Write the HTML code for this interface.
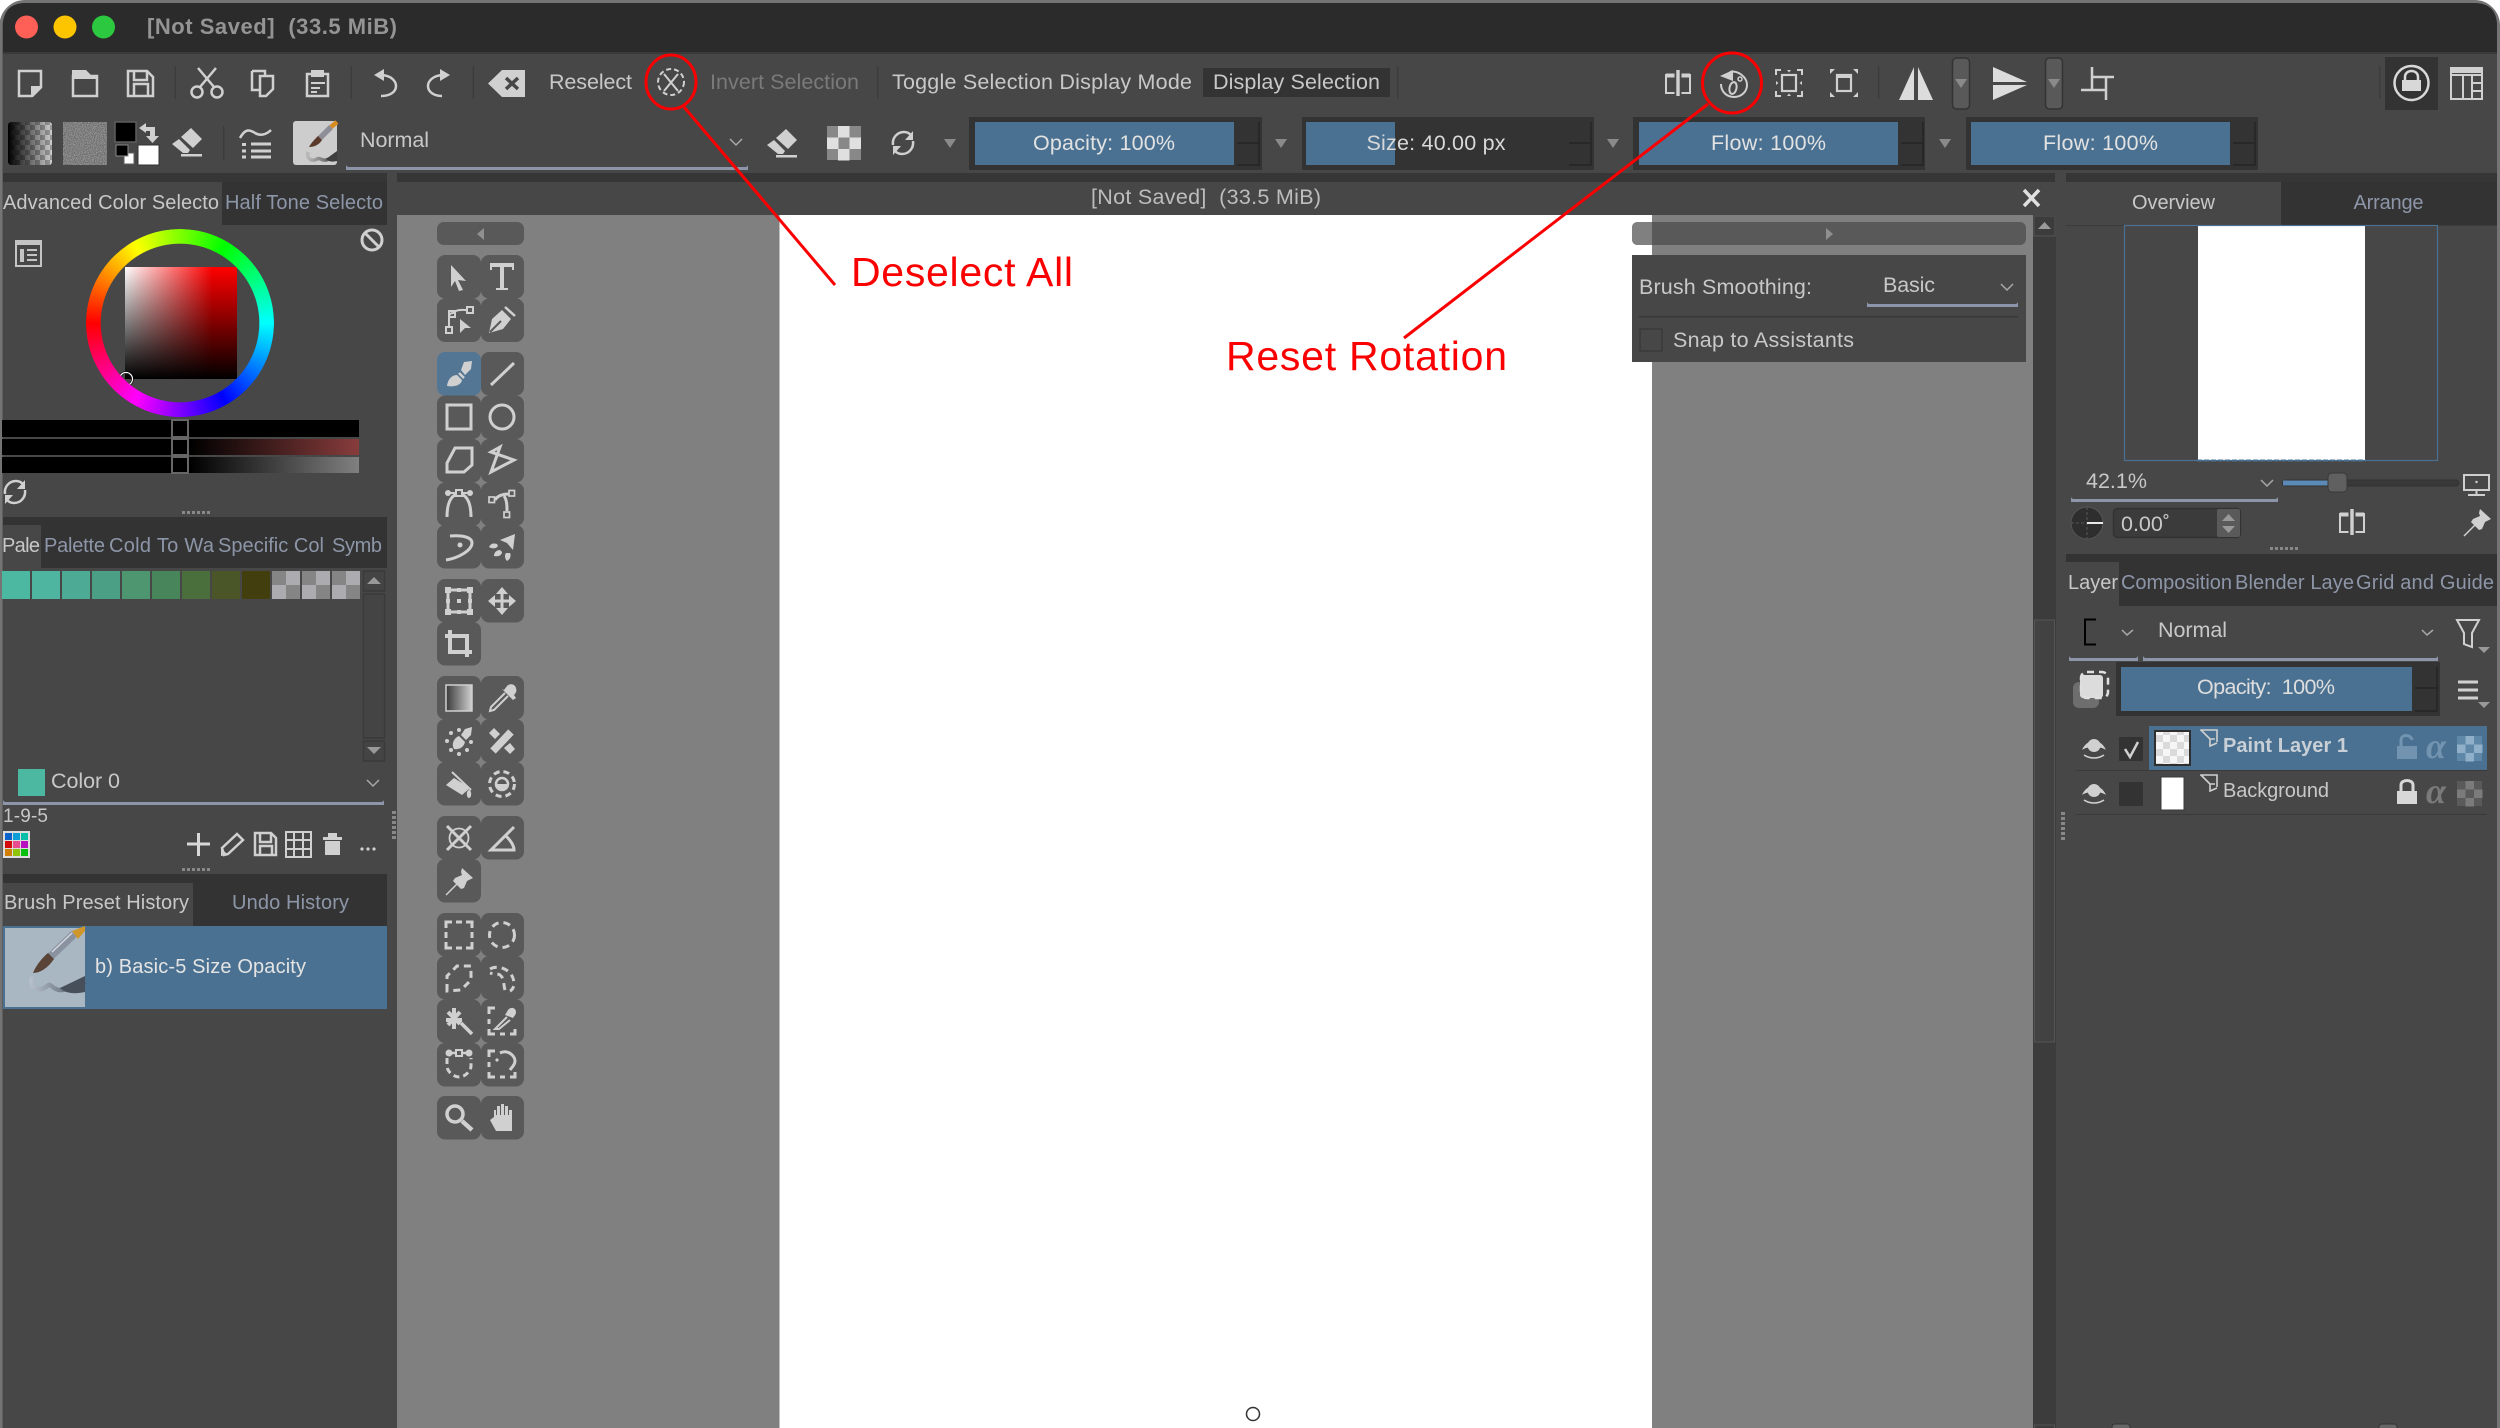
<!DOCTYPE html>
<html><head><meta charset="utf-8"><title>Krita</title>
<style>
html,body{margin:0;padding:0;background:#fff;width:2500px;height:1428px;overflow:hidden}
svg{position:absolute;left:0;top:0;display:block}
text{font-family:"Liberation Sans",sans-serif;font-size:21.5px;fill:#c8c8c8;white-space:pre}
.tab{font-size:20px}
.in{fill:#8d96a8}
.s{fill:none;stroke:#d0d0d0;stroke-width:2.5}
.f{fill:#d0d0d0;stroke:none}
.d{fill:none;stroke:#d0d0d0;stroke-width:3;stroke-dasharray:5 4}
.sep{fill:#3c3c3c}
.ul{fill:#8c95aa}
.chev{fill:none;stroke:#a8a8a8;stroke-width:1.5}
.cell{fill:#595959}
.red{fill:#fa0000;font-size:41px}
#wheel{position:absolute;left:86px;top:229px;width:188px;height:188px;border-radius:50%;
background:conic-gradient(from 270deg,#f00,#ff0,#0f0,#0ff,#00f,#f0f,#f00);
-webkit-mask:radial-gradient(circle,transparent 79px,#000 79.6px);mask:radial-gradient(circle,transparent 79px,#000 79.6px)}
</style></head><body>
<svg width="2500" height="1428" viewBox="0 0 2500 1428" xmlns="http://www.w3.org/2000/svg">
<defs>
<pattern id="ck8" width="10" height="10" patternUnits="userSpaceOnUse"><rect width="10" height="10" fill="#9a9a9a"/><rect width="5" height="5" fill="#cfcfcf"/><rect x="5" y="5" width="5" height="5" fill="#cfcfcf"/></pattern>
<pattern id="ck9" width="14" height="14" patternUnits="userSpaceOnUse"><rect width="14" height="14" fill="#dadada"/><rect width="7" height="7" fill="#f6f6f6"/><rect x="7" y="7" width="7" height="7" fill="#f6f6f6"/></pattern>
<filter id="nz" x="0" y="0" width="1" height="1" color-interpolation-filters="sRGB"><feTurbulence type="fractalNoise" baseFrequency="1.1" numOctaves="2" seed="3"/><feColorMatrix values=".5 0 0 0 .25  .5 0 0 0 .25  .5 0 0 0 .25  0 0 0 0 1"/></filter>
<linearGradient id="gk"><stop offset="0" stop-color="#000"/><stop offset="1" stop-color="#000" stop-opacity="0"/></linearGradient>
<linearGradient id="wr"><stop offset="0" stop-color="#fff"/><stop offset=".78" stop-color="#f00"/><stop offset="1" stop-color="#f00"/></linearGradient>
<linearGradient id="vk" x2="0" y2="1"><stop offset="0" stop-color="#000" stop-opacity="0"/><stop offset="1" stop-color="#000"/></linearGradient>
<linearGradient id="g2"><stop offset="0" stop-color="#000"/><stop offset="1" stop-color="#883c3c"/></linearGradient>
<linearGradient id="g3"><stop offset="0" stop-color="#000"/><stop offset="1" stop-color="#808080"/></linearGradient>
<linearGradient id="gt"><stop offset="0" stop-color="#3a3a3a"/><stop offset="1" stop-color="#d0d0d0"/></linearGradient>
<linearGradient id="st"><stop offset="0" stop-color="#b4bec8"/><stop offset=".5" stop-color="#7d8892"/><stop offset="1" stop-color="#3f4750"/></linearGradient>
<linearGradient id="st0"><stop offset="0" stop-color="#b8b8b8"/><stop offset=".5" stop-color="#808080"/><stop offset="1" stop-color="#333"/></linearGradient>
<g id="eye"><path class="f" d="M-12 2C-7-10 7-10 12 2C7-2-7-2-12 2Z"/><circle class="f" cy="-2.500" r="6.500"/><path class="s" style="stroke-width:1.600" d="M-10 7C-4 11 4 11 10 7"/></g>
<g id="drop"><path class="f" d="M2-8L5-12C8-15 13-14 14-10C15-7 14-5 12-3L14 0L11 2L0-9L2-8Z"/><path class="s" style="stroke-width:2" d="M3-5L-11 9L-12 13L-8 12L6-2"/></g>
<g id="mir"><rect class="f" x="-1.700" y="-13" width="3.400" height="26"/><path class="s" style="stroke-width:2" d="M-3.500-8H-12V10H-3.500M3.500-8H12V10H3.500"/><path class="f" d="M-12-9.500H-3.500V-5.500H-12ZM3.500-9.500H12V-5.500H3.500Z"/></g>
<g id="pin"><path class="f" d="M3-13L14-3L10-1L8 0L5 7L2 8L-6 0L-4-3L3-6L2-9Z"/><path class="s" style="stroke-width:1.500" d="M-2 3L-13 14"/></g>
<g id="lay"><path class="s" style="stroke-width:1.600" d="M-8-8V-9H8V3"/><path class="s" style="stroke-width:1.600" d="M-8-9L1 0V7L8 4M1 0H6"/></g>
<g id="refr"><path class="s" d="M-10 2C-11-5-6-11 1-11C4-11 6-10 8-8M10-2C11 5 6 11-1 11C-4 11-6 10-8 8"/><path class="f" d="M10-12V-3H2ZM-10 12V3H-2Z"/></g>
<g id="erase"><path class="f" d="M4-14L15-3L6 6L-6-5Z"/><path class="f" d="M-8-3L3 8L1 11H-4L-15 2Z"/><rect class="f" x="-6" y="12" width="21" height="2.500"/></g>
</defs>

<!-- window -->
<rect x="1" y="1.500" width="2497.500" height="1480" rx="24" fill="#474747" stroke="#747474" stroke-width="3"/>
<path d="M3 26Q3 3 26 3H2474Q2497 3 2497 26V53H3Z" fill="#2b2b2b"/>
<rect x="3" y="52" width="2494" height="2" fill="#3a3a3a"/>
<circle cx="26.500" cy="27" r="11.500" fill="#fe5f57"/><circle cx="65" cy="27" r="11.500" fill="#fdc400"/><circle cx="103.500" cy="27" r="11.500" fill="#2bc840"/>
<text x="147" y="34" textLength="250" style="font-size:22px;fill:#949494;font-weight:bold">[Not Saved]  (33.5 MiB)</text>

<!-- strip -->
<rect x="3" y="173" width="384" height="9" fill="#363636"/><rect x="397" y="173" width="1658" height="9" fill="#363636"/><rect x="2066" y="173" width="431" height="9" fill="#363636"/>

<!-- toolbar 1 -->
<path class="s" d="M19 71H41V87L32 96H19Z"/><path class="f" d="M42 86V88L33 97H31V86Z"/>
<path class="s" d="M73 76H97V96H73Z"/><path class="f" d="M72 70H86L92 76H97V79H72Z"/>
<path class="s" d="M128 71H147L153 77V96H128Z"/><path class="s" d="M134 71V80H147V71M134 96V84H148V96"/>
<circle class="s" cx="197" cy="92" r="5.500"/><circle class="s" cx="217" cy="92" r="5.500"/><path class="s" d="M200 87L216 68M214 87L198 68"/>
<path class="s" d="M252 71H265V76M252 71V90H260"/><path class="s" d="M260 76H273V89L266 96H260Z"/>
<path class="s" d="M307 74H328V96H307Z"/><rect class="f" x="311" y="70" width="13" height="7"/><path class="s" style="stroke-width:2" d="M311 83H325M311 88H320M311 92H317"/>
<path class="f" d="M384 69V81L374 75Z"/><path class="s" d="M380 75C392 75 396 82 396 86C396 92 390 96 381 96"/>
<path class="f" d="M440 69V81L450 75Z"/><path class="s" d="M444 75C432 75 428 82 428 86C428 92 434 96 442 96"/>
<rect class="sep" x="174.500" y="66" width="1.500" height="33"/><rect class="sep" x="350.500" y="66" width="1.500" height="33"/><rect class="sep" x="472.500" y="66" width="1.500" height="33"/>
<path class="f" d="M488 83.500L502 70H525V97H502Z"/><path d="M506 78L518 89M518 78L506 89" stroke="#474747" stroke-width="3.500" fill="none"/>
<text x="549" y="89" textLength="83">Reselect</text>
<circle class="d" cx="671" cy="82" r="13" style="stroke-width:2;stroke-dasharray:5 3"/><path class="s" style="stroke-width:2" d="M664 74L678 91M678 74L664 91"/>
<text x="710" y="89" textLength="149" style="fill:#7a7a7a">Invert Selection</text>
<rect class="sep" x="877" y="66" width="1.500" height="33"/>
<text x="892" y="89" textLength="300">Toggle Selection Display Mode</text>
<rect x="1203" y="68" width="187" height="29" fill="#333"/>
<text x="1213" y="89" textLength="167">Display Selection</text>
<rect class="sep" x="1397" y="66" width="1.500" height="33"/>

<use href="#mir" x="1678" y="83"/>
<g transform="translate(1734,84)"><path class="s" style="stroke-width:2" d="M-4-12C4-14 13-7 13 1C13 8 7 13 0 13C-7 13-13 8-13 0"/><path class="f" d="M-1-14V-3L-14-8Z"/><ellipse class="s" style="stroke-width:2" cx="-1" cy="4" rx="3.500" ry="6" transform="rotate(12 -1 4)"/><circle class="s" style="stroke-width:1.500" cx="6" cy="-5" r="2"/></g>
<g transform="translate(1789,83)"><path class="s" style="stroke-width:2" d="M-13-8V-13H-8M8-13H13V-8M13 8V13H8M-8 13H-13V8"/><rect class="s" style="stroke-width:2.200" x="-7" y="-8" width="14" height="16"/><path class="f" d="M-2-13H2L0-10.500ZM-2 13H2L0 10.500ZM-13-2V2L-10.500 0ZM13-2V2L10.500 0Z"/></g>
<g transform="translate(1844,83)"><rect class="s" style="stroke-width:2.200" x="-7" y="-8" width="14" height="16"/><rect class="f" x="-7" y="-9" width="14" height="4"/><path class="f" d="M-14-14H-9L-14-9ZM14-14H9L14-9ZM-14 14H-9L-14 9ZM14 14H9L14 9Z"/></g>
<rect class="sep" x="1878" y="66" width="1.500" height="33"/>
<path d="M1899 100L1914 67V100ZM1918 67L1933 100H1918Z" fill="#dcdcdc"/>
<rect x="1952.500" y="58" width="17" height="51" rx="4" fill="#595959" stroke="#333" stroke-width="1.500"/><path d="M1955 79H1967L1961 88Z" fill="#8a8a8a"/>
<path d="M1993 67L2027 82H1993ZM1993 85H2027L1993 100Z" fill="#dcdcdc"/>
<rect x="2045.500" y="58" width="17" height="51" rx="4" fill="#595959" stroke="#333" stroke-width="1.500"/><path d="M2048 79H2060L2054 88Z" fill="#8a8a8a"/>
<path class="s" d="M2092 67V91M2081 90H2106M2092 77H2114M2106 77V100"/>
<rect class="sep" x="2379" y="66" width="1.500" height="33"/>
<rect x="2385" y="57" width="53" height="53" fill="#333"/>
<circle cx="2411.500" cy="83" r="17" fill="none" stroke="#d8d8d8" stroke-width="2.500"/><rect x="2402" y="80" width="19" height="11" fill="#d8d8d8"/><path d="M2405 81V77C2405 69 2418 69 2418 77V81" fill="none" stroke="#d8d8d8" stroke-width="2.500"/>
<g fill="none" stroke="#d0d0d0" stroke-width="2"><rect x="2451" y="68" width="31" height="31"/><path d="M2451 75H2482M2463 75V99M2472 75V99M2472 83H2482M2472 91H2482"/></g><rect class="f" x="2451" y="68" width="31" height="5"/>

<!-- toolbar 2 -->
<rect x="8" y="122" width="44" height="43" rx="3" fill="url(#ck8)"/><rect x="8" y="122" width="44" height="43" rx="3" fill="url(#gk)"/>
<rect x="63" y="122" width="44" height="43" rx="3" fill="#7e7e7e" filter="url(#nz)"/>
<rect x="115" y="122" width="21" height="20" fill="#000" stroke="#5e5e5e" stroke-width="1.500"/>
<rect x="124" y="153" width="10" height="11" fill="#fff" stroke="#5e5e5e"/><rect x="116" y="145" width="12" height="11" fill="#000" stroke="#888"/>
<rect x="138" y="145" width="21" height="20" fill="#fff" stroke="#333"/>
<path class="f" d="M146 123V133L139 128ZM146 127H155V136H159L152.500 143L146 136H150V131H146Z"/>
<use href="#erase" x="187" y="142"/>
<rect class="sep" x="223" y="126" width="1.500" height="34"/>
<g transform="translate(255,143)"><path class="s" d="M-15-5C-10-14-6-14 0-10C5-7 11-8 16-13"/><path class="s" style="stroke-width:3" d="M-4 1H16M-4 8H16M-4 14H16"/><rect class="f" x="-13" y="0" width="4" height="3"/><rect class="f" x="-13" y="6.500" width="4" height="3"/><rect class="f" x="-13" y="12.500" width="4" height="3"/></g>
<rect x="293" y="121" width="44" height="44" rx="3" fill="#cdcdcd"/>
<path d="M319 139L331 127" stroke="#8e8e98" stroke-width="5.500"/><path d="M331 127L337 122" stroke="#d88b1f" stroke-width="4.500" fill="none"/>
<path d="M309 147C311 143 316 138 318 136L322 140C319 145 314 147 309 147Z" fill="#5b3a2c"/>
<path d="M308 152C306 159 312 162 317 159C320 157 321 161 326 160C330 159 334 157 337 156" fill="none" stroke="url(#st0)" stroke-width="3.500"/><path d="M326 159L337 151V161C333 162 329 162 326 159Z" fill="#3e3e3e"/>
<text x="360" y="147" textLength="69">Normal</text>
<path class="chev" d="M730 139L736 145L742 139"/>
<path class="ul" d="M346 165C347 167 348 167 350 167H744C746 167 747 167 748 165V170H346Z"/>
<use href="#erase" x="782" y="143"/>
<g><rect x="827" y="126" width="34" height="34" fill="#888"/><rect x="838" y="126" width="11.500" height="11.500" fill="#e0e0e0"/><rect x="827" y="137.500" width="11.500" height="11.500" fill="#e0e0e0"/><rect x="849.500" y="137.500" width="11.500" height="11.500" fill="#e0e0e0"/><rect x="838" y="149" width="11.500" height="11.500" fill="#e0e0e0"/></g>
<use href="#refr" x="903" y="143"/>
<path d="M944 139H956L950 148Z" fill="#8a8a8a"/><path d="M1275 139H1287L1281 148Z" fill="#8a8a8a"/><path d="M1607 139H1619L1613 148Z" fill="#8a8a8a"/><path d="M1939 139H1951L1945 148Z" fill="#8a8a8a"/>

<!-- sliders -->
<g fill="#333"><rect x="969" y="117" width="293" height="53"/><rect x="1302" y="117" width="292" height="53"/><rect x="1633" y="117" width="292" height="53"/><rect x="1966" y="117" width="292" height="53"/></g>
<g fill="#4a7191"><rect x="975" y="122" width="259" height="43"/><rect x="1306" y="122" width="89" height="43"/><rect x="1639" y="122" width="259" height="43"/><rect x="1971" y="122" width="259" height="43"/></g>
<g fill="none" stroke="#252525" stroke-width="1.500"><path d="M1237 143H1259V165H1237M1259 122V143"/><path d="M1569 143H1591V165H1569M1591 122V143"/><path d="M1901 143H1923V165H1901M1923 122V143"/><path d="M2233 143H2255V165H2233M2255 122V143"/></g>
<text x="1033" y="150" textLength="142" style="fill:#e2e2e2">Opacity: 100%</text>
<text x="1366.500" y="150" textLength="139" style="fill:#d8d8d8">Size: 40.00 px</text>
<text x="1711" y="150" textLength="115" style="fill:#e2e2e2">Flow: 100%</text>
<text x="2043" y="150" textLength="115" style="fill:#e2e2e2">Flow: 100%</text>

<!-- left dock -->
<rect x="3" y="182" width="384" height="43" fill="#333"/><rect x="3" y="182" width="219" height="43" fill="#474747"/>
<text class="tab" x="3" y="209" textLength="216">Advanced Color Selecto</text>
<text class="tab in" x="225" y="209" textLength="158">Half Tone Selecto</text>
<g fill="none" stroke="#c4c4c4" stroke-width="2"><rect x="16" y="241" width="25" height="25"/></g><rect x="16" y="241" width="25" height="4" fill="#c4c4c4"/><rect x="20" y="249" width="4" height="13" fill="#c4c4c4"/><path d="M27 250H37M27 255H37M27 260H37" stroke="#c4c4c4" stroke-width="2"/>
<circle cx="372" cy="240" r="10" fill="none" stroke="#d0d0d0" stroke-width="3"/><path d="M365 233L379 247" stroke="#d0d0d0" stroke-width="3"/>
<rect x="125" y="267" width="112" height="112" fill="url(#wr)"/><rect x="125" y="267" width="112" height="112" fill="url(#vk)"/>
<circle cx="126" cy="379" r="6.500" fill="none" stroke="#000" stroke-width="2.500"/><circle cx="126" cy="379" r="6.500" fill="none" stroke="#fff" stroke-width="1.200"/>
<rect x="2" y="420" width="357" height="17" fill="#000"/>
<rect x="2" y="439" width="357" height="16" fill="#000"/><rect x="190" y="439" width="169" height="16" fill="url(#g2)"/>
<rect x="2" y="457" width="357" height="16" fill="#000"/><rect x="190" y="457" width="169" height="16" fill="url(#g3)"/>
<g fill="none" stroke="#666" stroke-width="2"><rect x="172" y="420" width="16" height="17"/><rect x="172" y="439" width="16" height="16"/><rect x="172" y="457" width="16" height="16"/></g>
<use href="#refr" x="15" y="492"/>
<g fill="#888"><rect x="182" y="511" width="3" height="3"/><rect x="187" y="511" width="3" height="3"/><rect x="192" y="511" width="3" height="3"/><rect x="197" y="511" width="3" height="3"/><rect x="202" y="511" width="3" height="3"/><rect x="207" y="511" width="3" height="3"/>
<rect x="182" y="868" width="3" height="3"/><rect x="187" y="868" width="3" height="3"/><rect x="192" y="868" width="3" height="3"/><rect x="197" y="868" width="3" height="3"/><rect x="202" y="868" width="3" height="3"/><rect x="207" y="868" width="3" height="3"/>
<rect x="2270" y="547" width="3" height="3"/><rect x="2275" y="547" width="3" height="3"/><rect x="2280" y="547" width="3" height="3"/><rect x="2285" y="547" width="3" height="3"/><rect x="2290" y="547" width="3" height="3"/><rect x="2295" y="547" width="3" height="3"/>
<rect x="392" y="811" width="4" height="3"/><rect x="392" y="816" width="4" height="3"/><rect x="392" y="821" width="4" height="3"/><rect x="392" y="826" width="4" height="3"/><rect x="392" y="831" width="4" height="3"/><rect x="392" y="836" width="4" height="3"/>
<rect x="2061" y="812" width="4" height="3"/><rect x="2061" y="817" width="4" height="3"/><rect x="2061" y="822" width="4" height="3"/><rect x="2061" y="827" width="4" height="3"/><rect x="2061" y="832" width="4" height="3"/><rect x="2061" y="837" width="4" height="3"/></g>
<rect x="3" y="517" width="384" height="51" fill="#333"/><rect x="3" y="525" width="38" height="43" fill="#474747"/>
<text class="tab" x="2" y="552" textLength="38">Pale</text>
<text class="tab in" x="44" y="552" textLength="61">Palette</text>
<text class="tab in" x="109" y="552" textLength="105">Cold To Wa</text>
<text class="tab in" x="218" y="552" textLength="106">Specific Col</text>
<text class="tab in" x="332" y="552" textLength="50">Symb</text>
<g><rect x="2" y="571" width="28" height="28" fill="#4db8a2"/><rect x="32" y="571" width="28" height="28" fill="#4db5a0"/><rect x="62" y="571" width="28" height="28" fill="#4dab95"/><rect x="92" y="571" width="28" height="28" fill="#4a9f85"/><rect x="122" y="571" width="28" height="28" fill="#4d9670"/><rect x="152" y="571" width="28" height="28" fill="#48855a"/><rect x="182" y="571" width="28" height="28" fill="#4a6e3c"/><rect x="212" y="571" width="28" height="28" fill="#4a5528"/><rect x="242" y="571" width="28" height="28" fill="#423e0e"/></g>
<g fill="#858585"><rect x="272" y="571" width="28" height="28"/><rect x="302" y="571" width="28" height="28"/><rect x="332" y="571" width="28" height="28"/></g>
<g fill="#ababb0"><rect x="286" y="571" width="14" height="14"/><rect x="272" y="585" width="14" height="14"/><rect x="316" y="571" width="14" height="14"/><rect x="302" y="585" width="14" height="14"/><rect x="346" y="571" width="14" height="14"/><rect x="332" y="585" width="14" height="14"/></g>
<g fill="#444" stroke="#3a3a3a" stroke-width="1.500"><rect x="363.500" y="571" width="21" height="20"/><rect x="363.500" y="594" width="21" height="144"/><rect x="363.500" y="741" width="21" height="20"/></g>
<path d="M367 584H381L374 577ZM367 747H381L374 754Z" fill="#999"/>
<rect x="18" y="769" width="27" height="27" fill="#4db8a2"/>
<text x="51" y="788" textLength="69">Color 0</text>
<path class="chev" d="M367 780L373 786L379 780"/>
<path class="ul" d="M3 800C4 802 5 802 7 802H380C382 802 383 802 384 800V805H3Z"/>
<text class="tab" x="3" y="822" textLength="45" style="font-size:19px">1-9-5</text>
<rect x="3" y="831" width="27" height="27" fill="#ddd"/>
<g><rect x="5" y="833" width="7" height="7" fill="#0b62c8"/><rect x="13" y="833" width="7" height="7" fill="#0c9ed6"/><rect x="21" y="833" width="7" height="7" fill="#07bfa8"/><rect x="5" y="841" width="7" height="7" fill="#d30b0b"/><rect x="13" y="841" width="7" height="7" fill="#e84e8f"/><rect x="21" y="841" width="7" height="7" fill="#b712c0"/><rect x="5" y="849" width="7" height="7" fill="#cf7f08"/><rect x="13" y="849" width="7" height="7" fill="#8fc408"/><rect x="21" y="849" width="7" height="7" fill="#0ac00f"/></g>
<path d="M187 844H210M198.500 833V856" stroke="#d8d8d8" stroke-width="3" fill="none"/>
<path class="s" d="M224 855L222 848L237 834L243 840L228 854Z"/><path class="f" d="M221 856V848L228 855Z"/>
<path class="s" d="M255 833H271L276 838V855H255Z"/><path class="s" d="M260 833V842H271V833M260 855V846H272V855"/>
<g fill="none" stroke="#d0d0d0" stroke-width="2"><rect x="286" y="832" width="25" height="25"/><path d="M294 832V857M303 832V857M286 840H311M286 849H311"/></g>
<path class="f" d="M323 837H342V840H323ZM328 833H337V837H328ZM325 841H340V855H325Z"/>
<g class="f"><circle cx="362" cy="849" r="1.600"/><circle cx="368" cy="849" r="1.600"/><circle cx="374" cy="849" r="1.600"/></g>
<rect x="3" y="874" width="384" height="52" fill="#333"/><rect x="3" y="883" width="190" height="43" fill="#474747"/>
<text class="tab" x="4" y="909" textLength="185">Brush Preset History</text>
<text class="tab in" x="232" y="909" textLength="117">Undo History</text>
<rect x="3" y="926" width="384" height="83" fill="#4a7191"/>
<rect x="5" y="928" width="80" height="79" fill="#a9b7c3"/>
<path d="M50 957L74 934" stroke="#8a92a0" stroke-width="8"/><path d="M52 952L72 933" stroke="#d4d8de" stroke-width="1.500"/>
<path d="M72 931L85 926V931L78 939Z" fill="#cf962c"/>
<path d="M33 973C36 965 43 957 48 953L54 959C48 968 40 973 33 973Z" fill="#5a4337"/>
<path d="M32 977C28 988 40 993 47 986C51 982 52 990 60 990C68 990 78 984 85 982" fill="none" stroke="url(#st)" stroke-width="4.500"/><path d="M60 988L85 976V992C75 994 66 994 60 988Z" fill="#47505a"/>
<text class="tab" x="95" y="973" textLength="211" style="fill:#e4e4e4">b) Basic-5 Size Opacity</text>

<!-- canvas -->
<path d="M397 215V190Q397 182 405 182H2047Q2055 182 2055 190V215Z" fill="#474747"/>
<text x="1091" y="204" textLength="230" style="fill:#bdbdbd">[Not Saved]  (33.5 MiB)</text>
<path d="M2024 190L2039 206M2039 190L2024 206" stroke="#e0e0e0" stroke-width="3.500" fill="none"/>
<rect x="397" y="215" width="1636" height="1213" fill="#808080"/>
<rect x="780" y="215" width="872" height="1213" fill="#fff"/>
<rect x="779" y="215" width="1" height="1213" fill="#c0c0c0"/>
<rect x="2033" y="215" width="23" height="1213" fill="#3c3c3c"/>
<rect x="2034" y="216" width="21" height="20" fill="none" stroke="#555"/><path d="M2038 229H2051L2044.500 222Z" fill="#9a9a9a"/>
<rect x="2034.500" y="620" width="20" height="422" fill="#424242" stroke="#555"/>
<rect x="2034.500" y="1425" width="20" height="6" fill="none" stroke="#555"/>
<circle cx="1253" cy="1414" r="6.500" fill="none" stroke="#333" stroke-width="1.500"/>

<!-- toolbox -->
<rect x="437" y="222" width="87" height="23" rx="7" class="cell"/><path d="M484 228V240L477 234Z" fill="#909090"/>
<g class="cell">
<rect x="437" y="255" width="44" height="43.500" rx="8"/><rect x="481" y="255" width="43" height="43.500" rx="8"/><rect x="437" y="298.500" width="44" height="43.500" rx="8"/><rect x="481" y="298.500" width="43" height="43.500" rx="8"/>
<rect x="481" y="352" width="43" height="43.500" rx="8"/>
<rect x="437" y="395.500" width="44" height="43.500" rx="8"/><rect x="481" y="395.500" width="43" height="43.500" rx="8"/><rect x="437" y="439" width="44" height="43.500" rx="8"/><rect x="481" y="439" width="43" height="43.500" rx="8"/><rect x="437" y="482.500" width="44" height="43.500" rx="8"/><rect x="481" y="482.500" width="43" height="43.500" rx="8"/><rect x="437" y="525" width="44" height="43.500" rx="8"/><rect x="481" y="525" width="43" height="43.500" rx="8"/>
<rect x="437" y="579" width="44" height="43.500" rx="8"/><rect x="481" y="579" width="43" height="43.500" rx="8"/><rect x="437" y="622" width="44" height="43.500" rx="8"/>
<rect x="437" y="676" width="44" height="43.500" rx="8"/><rect x="481" y="676" width="43" height="43.500" rx="8"/><rect x="437" y="719" width="44" height="43.500" rx="8"/><rect x="481" y="719" width="43" height="43.500" rx="8"/><rect x="437" y="762" width="44" height="43.500" rx="8"/><rect x="481" y="762" width="43" height="43.500" rx="8"/>
<rect x="437" y="816" width="44" height="43.500" rx="8"/><rect x="481" y="816" width="43" height="43.500" rx="8"/><rect x="437" y="859" width="44" height="43.500" rx="8"/>
<rect x="437" y="913" width="44" height="43.500" rx="8"/><rect x="481" y="913" width="43" height="43.500" rx="8"/><rect x="437" y="956" width="44" height="43.500" rx="8"/><rect x="481" y="956" width="43" height="43.500" rx="8"/><rect x="437" y="999.500" width="44" height="43.500" rx="8"/><rect x="481" y="999.500" width="43" height="43.500" rx="8"/><rect x="437" y="1043" width="44" height="43.500" rx="8"/><rect x="481" y="1043" width="43" height="43.500" rx="8"/>
<rect x="437" y="1096" width="44" height="43.500" rx="8"/><rect x="481" y="1096" width="43" height="43.500" rx="8"/>
</g>
<rect x="437" y="352" width="44" height="43.500" rx="8" fill="#527694"/>

<g transform="translate(459,277)"><path class="f" d="M-8-12L7 4L-1 3L4 13L0 14L-4 4L-8 10Z"/></g>
<g transform="translate(502,277)"><path class="f" d="M-12-14H12V-7H10V-10H2V11H6V13H-6V11H-2V-10H-10V-7H-12Z"/></g>
<g transform="translate(459,320)"><path class="s" style="stroke-width:2" d="M-10 7V-3C-10-6-8-7-6-7C-2-11 4-10 8-10"/><g fill="none" stroke="#d0d0d0" stroke-width="2"><rect x="-13" y="7" width="6" height="6"/><rect x="-10" y="-9" width="6" height="6"/><rect x="8" y="-13" width="6" height="6"/></g><path class="f" d="M1-1L12 8H6L1 13Z"/></g>
<g transform="translate(502,320)"><path class="f" d="M-13 13L-10-1L0-10L9-1L1 9Z"/><path d="M-12 12L-1 1" stroke="#595959" stroke-width="2"/><path class="s" d="M3-13L13-4"/></g>
<g transform="translate(459,374)"><path class="f" d="M-12 12C-11 4-6 1-2 1L3 6C2 12-6 13-12 12Z"/><path class="s" d="M0-1L5 4"/><path class="f" d="M2-4L5-12L13-13L12-5L6 1Z"/></g>
<path class="s" style="stroke-width:3" d="M491 385L514 363"/>
<rect class="s" style="stroke-width:3" x="447" y="405" width="24" height="24"/><circle class="s" style="stroke-width:3" cx="502" cy="417" r="12"/>
<path class="s" style="stroke-width:3" transform="translate(459,460)" d="M-12 3V12H5L13 5V-12H-4Z"/>
<path class="s" style="stroke-width:3" transform="translate(502,460)" d="M-2-13L-11-8L12 0L-11 12Z"/>
<g transform="translate(459,504)"><path class="s" style="stroke-width:3" d="M-12 13C-12-4-6-10 0-10C6-10 12-4 12 13"/><path class="s" style="stroke-width:2" d="M-12-11H12"/><circle class="f" cx="-11" cy="-11" r="3"/><circle class="f" cx="11" cy="-11" r="3"/><rect x="-3" y="-14" width="6" height="6" fill="#595959" stroke="#d0d0d0" stroke-width="2"/></g>
<g transform="translate(502,504)"><path class="s" style="stroke-width:3" d="M-7-4C-4-9 2-10 7-10M2-8C5-4 5 2 5 7"/><g fill="#595959" stroke="#d0d0d0" stroke-width="1.700"><rect x="-13" y="-7" width="5.500" height="5.500"/><rect x="7" y="-13.500" width="5.500" height="5.500"/><rect x="2" y="8" width="5.500" height="5.500"/></g></g>
<g transform="translate(459,547)"><path class="s" style="stroke-width:3" d="M-13 13C0 11 13 3 13-4C13-10 3-12-9-11"/><circle class="f" cx="1" cy="-2" r="2.500"/></g>
<g transform="translate(502,547)"><path class="f" d="M13-13L11 3L5-4L-2-7Z"/><path class="f" d="M-13 0C-11-4-8-4-5-3L-4-1C-6 2-10 2-13 0ZM-8 9C-8 5-5 3-2 3L0 5C0 8-3 10-8 9ZM5 14C2 11 3 7 4 6H8C9 8 9 12 5 14Z"/></g>
<g transform="translate(459,601)"><rect class="s" style="stroke-width:3" x="-11" y="-11" width="22" height="22"/><g class="f"><rect x="-14" y="-14" width="6" height="6"/><rect x="8" y="-14" width="6" height="6"/><rect x="-14" y="8" width="6" height="6"/><rect x="8" y="8" width="6" height="6"/><rect x="-2" y="-13" width="4" height="4"/><rect x="-2" y="9" width="4" height="4"/><rect x="-13" y="-2" width="4" height="4"/><rect x="9" y="-2" width="4" height="4"/><rect x="-2" y="-2" width="4" height="4"/></g></g>
<g transform="translate(502,601)"><path class="s" style="stroke-width:3" d="M0-10V10M-10 0H10"/><path class="f" d="M0-14L6-7H-6ZM0 14L6 7H-6ZM-14 0L-7-6V6ZM14 0L7-6V6Z"/></g>
<path class="s" style="stroke-width:4" transform="translate(459,644)" d="M-9-14V8H13M-14-8H8V13"/>
<g transform="translate(459,698)"><rect x="-13" y="-13" width="26" height="26" fill="url(#gt)" stroke="#d0d0d0" stroke-width="1.500"/></g>
<use href="#drop" x="502" y="698"/>
<g transform="translate(459,741)"><path class="f" d="M-5 8C-8 3-5-3 0-5L6 1C5 6 0 9-5 8Z"/><path class="f" d="M2-6L6-12L13-14L12-6L7-1Z"/><g class="f"><circle cx="-12" cy="0" r="2"/><circle cx="-8" cy="-8" r="2"/><circle cx="0" cy="-11" r="2"/><circle cx="12" cy="1" r="2"/><circle cx="8" cy="9" r="2"/><circle cx="0" cy="13" r="2"/><circle cx="-8" cy="9" r="2"/></g></g>
<g transform="translate(502,741)"><path class="s" style="stroke-width:7.500" d="M-9 10L9-9"/><path class="f" d="M-8-13L-2-7L-7-2L-13-8ZM8 2L13 8L8 13L2 7Z"/></g>
<g transform="translate(459,784)"><path class="f" d="M-13 1L-5-6L11 4L3 11Z"/><path class="s" style="stroke-width:2" d="M-7-12L12 6"/><ellipse class="f" cx="10" cy="10" rx="2.200" ry="4"/></g>
<g transform="translate(502,784)"><circle class="d" style="stroke-dasharray:6 4" r="12.500"/><circle class="s" r="6"/><path class="f" d="M-6 0H6C6 4 3 6 0 6C-3 6-6 4-6 0Z"/></g>
<g transform="translate(459,838)"><path class="s" style="stroke-width:3" d="M-12-12L12 12M12-12L-12 12"/><circle class="s" style="stroke-width:1.800" r="9.500"/></g>
<path class="s" style="stroke-width:3" transform="translate(502,838)" d="M12-11L-11 12H12C12 8 9 3 4-2"/>
<use href="#pin" x="459" y="881"/>
<path class="s" style="stroke-width:3" transform="translate(459,935)" d="M-13-7V-13H-7M-3-13H3M7-13H13V-7M13-3V3M13 7V13H7M3 13H-3M-7 13H-13V7M-13 3V-3"/>
<circle class="d" style="stroke-dasharray:7 5" cx="502" cy="935" r="12.500"/>
<path class="d" style="stroke-dasharray:7 5" transform="translate(459,978)" d="M-12 13V-2L-2-12H12V2L2 12Z"/>
<path class="d" style="stroke-dasharray:7 5" transform="translate(502,978)" d="M-12-9C-3-14 12-8 12 6C12 9 10 12 8 13M3 12C1 6 3 1-2-3C-5-5-9-4-12-5"/>
<g transform="translate(459,1021)"><path class="s" style="stroke-width:4" d="M-13-1H3M-5-13V8M-11-9L1 3M1-9L-11 4"/><path class="s" style="stroke-width:3.500" d="M2 2L13 13"/></g>
<g transform="translate(502,1021)"><path class="s" style="stroke-width:3" d="M-13-7V-13H-7M-13 3V-2M-13 8V13H-7M-2 13H3M8 13H13V8"/><path class="f" d="M3-6L6-11C9-15 14-13 14-9C14-6 12-5 11-3Z"/><path class="s" style="stroke-width:2" d="M5-4L-5 6L-7 8L-3 8L8-1"/></g>
<g transform="translate(459,1064)"><path class="d" style="stroke-dasharray:6 4" d="M-12-6V2C-12 7-6 13 0 13C6 13 12 7 12 2V-6"/><path class="s" d="M-10-11H10"/><circle class="f" cx="-10" cy="-11" r="3.500"/><circle class="f" cx="10" cy="-11" r="3.500"/><rect x="-3" y="-14" width="6" height="6" fill="#595959" stroke="#d0d0d0" stroke-width="2"/></g>
<g transform="translate(502,1064)"><path class="s" style="stroke-width:3" d="M-13-7V-13H-7M-13 3V-2M-13 8V13H-7M-2 13H3M8 13H13V8"/><path class="s" style="stroke-width:3" d="M-2-11C6-15 13-8 13-3C13 1 10 3 8 6"/><circle class="f" cx="-5" cy="-4" r="1.600"/></g>
<g transform="translate(459,1118)"><circle class="s" style="stroke-width:3.500" cx="-4" cy="-4" r="8"/><path class="s" style="stroke-width:4.500" d="M3 3L13 12"/></g>
<g transform="translate(502,1118)"><path class="f" d="M-12 2L-8-1V-2L-8-8L-6-8V-3L-5-3V-12H-2V-3H-1V-14H2V-3H3V-12H6V-3H7V-8H10V13H-6Z"/></g>

<!-- popup -->
<rect x="1632" y="222" width="394" height="23" rx="6" fill="#595959"/><path d="M1632 228Q1632 222 1638 222H1652V245H1638Q1632 245 1632 239Z" fill="#808080"/>
<path d="M1826 228V240L1833 234Z" fill="#909090"/>
<rect x="1632" y="255" width="394" height="107" fill="#474747"/>
<text x="1639" y="294" textLength="173">Brush Smoothing:</text>
<text x="1883" y="292" textLength="52">Basic</text>
<path class="chev" d="M2001 284L2007 290L2013 284"/>
<path class="ul" d="M1867 302C1868 304 1869 304 1871 304H2014C2016 304 2017 304 2018 302V307H1867Z"/>
<rect x="1639" y="316" width="379" height="1.500" fill="#383838"/>
<rect x="1640" y="329" width="22" height="22" rx="1" fill="#474747" stroke="#3a3a3a" stroke-width="1.500"/>
<text x="1673" y="347" textLength="181">Snap to Assistants</text>

<!-- right dock -->
<rect x="2066" y="182" width="431" height="43" fill="#333"/><rect x="2066" y="182" width="215" height="43" fill="#474747"/><rect x="2066" y="225" width="431" height="1" fill="#3b3b3b"/>
<text class="tab" x="2132" y="209" textLength="83">Overview</text>
<text class="tab in" x="2353.500" y="209" textLength="70">Arrange</text>
<rect x="2198" y="226" width="167" height="234" fill="#fff"/>
<rect x="2124.500" y="225.500" width="313" height="235" fill="none" stroke="#4a7191" stroke-width="1.200"/>
<path d="M2197 460.500H2366" stroke="#4a7191" stroke-width="2" stroke-dasharray="5 2"/>
<text x="2086" y="488" textLength="61">42.1%</text>
<path class="chev" d="M2261 480L2267 486L2273 480"/>
<path class="ul" d="M2071 497C2072 499 2073 499 2075 499H2274C2276 499 2277 499 2278 497V502H2071Z"/>
<rect x="2282" y="480" width="177" height="6" rx="3" fill="#393939" stroke="#333"/><rect x="2283" y="480.500" width="45" height="5" fill="#5a8ab5"/>
<rect x="2328" y="473" width="19" height="19" rx="4" fill="#606060" stroke="#383838"/>
<g fill="none" stroke="#cfcfcf" stroke-width="2"><rect x="2464" y="475" width="25" height="15"/><path d="M2476.500 490V494M2468 495H2485"/></g><circle cx="2476.500" cy="482" r="1.200" fill="#cfcfcf"/>
<circle cx="2087" cy="523" r="16" fill="#2e2e2e" stroke="#555"/><path d="M2071 523H2087M2087 507V539" stroke="#555" stroke-width="1" stroke-dasharray="3 2"/><path d="M2087 523H2103" stroke="#e8e8e8" stroke-width="2"/>
<rect x="2113.500" y="508.500" width="127" height="29" rx="4" fill="#3b3b3b" stroke="#333" stroke-width="1.500"/><rect x="2217" y="509" width="23" height="28" rx="2" fill="#5a5a5a"/><path d="M2222 521H2235L2228.500 514ZM2222 526H2235L2228.500 533Z" fill="#999"/>
<text x="2121" y="531" textLength="49">0.00˚</text>
<use href="#mir" x="2352" y="522"/>
<use href="#pin" x="2477" y="522"/>
<rect x="2066" y="554" width="431" height="52" fill="#333"/><rect x="2066" y="562" width="53" height="44" fill="#474747"/>
<text class="tab" x="2068" y="589" textLength="50">Layer</text>
<text class="tab in" x="2121" y="589" textLength="111">Composition</text>
<text class="tab in" x="2235" y="589" textLength="119">Blender Laye</text>
<text class="tab in" x="2356" y="589" textLength="138">Grid and Guide</text>
<path d="M2096 619.500H2085V644.500H2096" fill="none" stroke="#000" stroke-width="2"/>
<path class="chev" d="M2122 630L2127 635L2133 630"/>
<path class="ul" d="M2069 656C2070 658 2071 658 2073 658H2134C2136 658 2137 658 2138 656V661H2069Z"/>
<text x="2158" y="637" textLength="69">Normal</text>
<path class="chev" d="M2422 630L2427 635L2433 630"/>
<path class="ul" d="M2143 656C2144 658 2145 658 2147 658H2434C2436 658 2437 658 2438 656V661H2143Z"/>
<path class="s" style="stroke-width:2" d="M2457 620H2479L2472 633V647L2464 644V633Z"/><path d="M2478 647H2490L2484 653Z" fill="#999"/>
<g><rect x="2073" y="682" width="26" height="26" rx="6" fill="#6e6e6e"/><rect x="2080" y="675" width="23" height="23" rx="3" fill="#dcdcdc"/><rect x="2081" y="672" width="27" height="26" rx="6" fill="none" stroke="#e0e0e0" stroke-width="2.500" stroke-dasharray="7 5"/></g>
<rect x="2116" y="662" width="324" height="54" fill="#333"/><rect x="2121" y="667" width="291" height="44" fill="#4a7191"/>
<path d="M2415 688H2437V711H2415M2437 667V688" fill="none" stroke="#252525" stroke-width="1.500"/>
<text x="2197" y="694" textLength="138" style="fill:#dedede">Opacity:  100%</text>
<path class="s" style="stroke-width:3" d="M2458 682H2478M2458 690H2478M2458 698H2478"/><path d="M2478 702H2490L2484 708Z" fill="#999"/>
<rect x="2149" y="726" width="338" height="44" fill="#4a7191"/>
<rect x="2076" y="770" width="411" height="1" fill="#3a3a3a"/><rect x="2076" y="814" width="411" height="1" fill="#3a3a3a"/>
<use href="#eye" x="2094" y="748"/><use href="#eye" x="2094" y="793"/>
<rect x="2119" y="737" width="24" height="24" rx="1" fill="#333"/><path d="M2125 749L2130 757L2138 742" fill="none" stroke="#d0d0d0" stroke-width="2.500"/>
<rect x="2119" y="782" width="24" height="24" rx="1" fill="#333"/>
<rect x="2155" y="731" width="35" height="34" fill="url(#ck9)" stroke="#2f2f2f" stroke-width="2"/>
<rect x="2161" y="777" width="23" height="33" fill="#fff" stroke="#3a3a3a"/>
<use href="#lay" x="2209" y="739"/><use href="#lay" x="2209" y="784"/>
<text x="2223" y="752" textLength="125" style="fill:#c8cfd6;font-weight:bold;font-size:20px">Paint Layer 1</text>
<text x="2223" y="797" textLength="106" style="font-size:20px">Background</text>
<g><rect x="2397" y="746" width="20" height="13" fill="#7394b0"/><path d="M2401 746V740C2401 734 2411 734 2412 740" fill="none" stroke="#7394b0" stroke-width="3"/>
<rect x="2397" y="791" width="20" height="13" fill="#d8d8d8"/><path d="M2401 791V785C2401 779 2413 779 2413 785V791" fill="none" stroke="#d8d8d8" stroke-width="3"/></g>
<text x="2426" y="758" style="font-family:'Liberation Serif',serif;font-style:italic;font-weight:bold;font-size:36px;fill:#7394b0">α</text>
<text x="2426" y="803" style="font-family:'Liberation Serif',serif;font-style:italic;font-weight:bold;font-size:36px;fill:#7a7a7a">α</text>
<g fill="#5f87a8"><rect x="2457" y="736" width="25" height="25"/></g><g fill="#8fb0c8"><rect x="2465.500" y="736" width="8.500" height="8.500"/><rect x="2457" y="744.500" width="8.500" height="8.500"/><rect x="2474" y="744.500" width="8.500" height="8.500"/><rect x="2465.500" y="753" width="8.500" height="8.500"/></g>
<g fill="#5a5a5a"><rect x="2457" y="781" width="25" height="25"/></g><g fill="#7b7b7b"><rect x="2465.500" y="781" width="8.500" height="8.500"/><rect x="2457" y="789.500" width="8.500" height="8.500"/><rect x="2474" y="789.500" width="8.500" height="8.500"/><rect x="2465.500" y="798" width="8.500" height="8.500"/></g>
<rect x="2112" y="1424" width="18" height="8" rx="3" fill="#666" stroke="#333"/><rect x="2379" y="1424" width="18" height="8" rx="3" fill="#666" stroke="#333"/>

<!-- annotations -->
<g fill="none" stroke="#fa0000" stroke-width="3">
<ellipse cx="671" cy="82" rx="25" ry="27"/>
<path d="M684 107L835 285"/>
<ellipse cx="1732" cy="83" rx="29.500" ry="30"/>
<path d="M1708 104L1404 338"/>
</g>
<text class="red" x="851" y="286" textLength="222">Deselect All</text>
<text class="red" x="1226" y="370" textLength="281">Reset Rotation</text>
</svg>
<div id="wheel"></div>
</body></html>
